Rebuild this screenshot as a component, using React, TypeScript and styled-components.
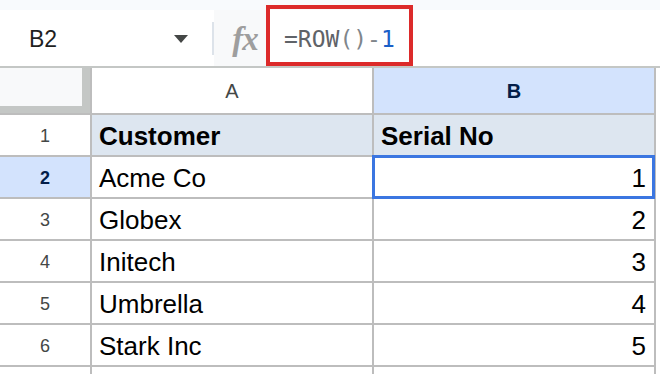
import React from 'react';
import styled, { createGlobalStyle } from 'styled-components';

const GlobalStyle = createGlobalStyle`
    html, body {
        margin: 0;
        padding: 0;
        background: #ffffff;
        font-family: 'Liberation Sans', Arial, sans-serif;
        overflow: hidden;
    }
`;

const Page = styled.div`
    position: relative;
    width: 660px;
    height: 374px;
    overflow: hidden;
    background: #ffffff;
`;

const TopStrip = styled.div`
    height: 10px;
    background: #f8fafd;
`;

const Toolbar = styled.div`
    display: flex;
    height: 56px;
    border-bottom: 2px solid #c4c7c5;
`;

const NameBox = styled.div`
    width: 212px;
    display: flex;
    align-items: center;
    justify-content: space-between;
    padding: 2px 24px 0 29px;
    box-sizing: border-box;
    background: #ffffff;
    font-size: 23px;
    color: #1f1f1f;
`;

const Caret = styled.span`
    width: 0;
    height: 0;
    border-left: 7px solid transparent;
    border-right: 7px solid transparent;
    border-top: 8px solid #444746;
`;

const Divider = styled.div`
    align-self: center;
    width: 2px;
    height: 33px;
    background: #dde3ea;
`;

const FxBox = styled.div`
    width: 52px;
    display: flex;
    align-items: center;
    justify-content: center;
    padding: 2px 0 0 10px;
    box-sizing: border-box;
    background: #f8f9fa;
    color: #9e9e9e;
    font-family: 'Liberation Serif', 'DejaVu Serif', serif;
    font-style: italic;
    font-weight: bold;
    font-size: 33px;
    letter-spacing: -1px;
`;

const FormulaBox = styled.div`
    flex: 1;
    display: flex;
    align-items: center;
    padding: 2px 0 0 18px;
    font-family: 'DejaVu Sans Mono', 'Liberation Mono', monospace;
    font-size: 23px;
    color: #5f6368;
`;

const Tok = styled.span<{ tone: string }>`
    color: ${(p) => p.tone};
`;

const Highlight = styled.div`
    position: absolute;
    left: 266px;
    top: 5px;
    width: 147px;
    height: 61px;
    box-sizing: border-box;
    border: 4px solid #dc2a2a;
    pointer-events: none;
`;

const Grid = styled.div`
    display: grid;
    width: 656px;
    grid-template-columns: 90px 280px 280px;
    grid-auto-rows: 40px;
    grid-template-rows: 45px;
    gap: 2px;
    background: #bdbdbd;
`;

const Corner = styled.div`
    display: flex;
    padding: 0 8px 7px 0;
    background: #c4c7c5;
`;

const CornerFill = styled.div`
    flex: 1;
    background: #f8f9fa;
`;

const ColHead = styled.div<{ active?: boolean }>`
    display: flex;
    align-items: center;
    justify-content: center;
    padding-top: 2px;
    background: ${(p) => (p.active ? '#d3e3fd' : '#ffffff')};
    color: ${(p) => (p.active ? '#041e49' : '#444746')};
    font-weight: ${(p) => (p.active ? 'bold' : 'normal')};
    font-size: 20px;
`;

const RowHead = styled.div<{ active?: boolean }>`
    display: flex;
    align-items: center;
    justify-content: center;
    padding-top: 2px;
    background: ${(p) => (p.active ? '#d3e3fd' : '#ffffff')};
    color: ${(p) => (p.active ? '#041e49' : '#444746')};
    font-weight: ${(p) => (p.active ? 'bold' : 'normal')};
    font-size: 18px;
`;

const Cell = styled.div<{ head?: boolean; num?: boolean }>`
    position: relative;
    display: flex;
    align-items: center;
    justify-content: ${(p) => (p.num ? 'flex-end' : 'flex-start')};
    padding: 3px 8px 0 7px;
    background: ${(p) => (p.head ? '#dde6f0' : '#ffffff')};
    font-weight: ${(p) => (p.head ? 'bold' : 'normal')};
    font-size: 26px;
    color: #000000;
`;

const Selection = styled.div`
    position: absolute;
    top: -2px;
    left: -2px;
    right: -1px;
    bottom: -2px;
    border: 3px solid #3b76e1;
`;

const Filler = styled.div`
    background: #ffffff;
`;

const rows = [
    { name: 'Acme Co', serial: 1 },
    { name: 'Globex', serial: 2 },
    { name: 'Initech', serial: 3 },
    { name: 'Umbrella', serial: 4 },
    { name: 'Stark Inc', serial: 5 },
];

const App: React.FunctionComponent = () => {
    return (
        <Page>
            <GlobalStyle />
            <TopStrip />
            <Toolbar>
                <NameBox>
                    <span>B2</span>
                    <Caret />
                </NameBox>
                <Divider />
                <FxBox>fx</FxBox>
                <FormulaBox>
                    <Tok tone="#5f6368">=ROW</Tok>
                    <Tok tone="#80868b">()-</Tok>
                    <Tok tone="#1a5fc8">1</Tok>
                </FormulaBox>
            </Toolbar>
            <Highlight />
            <Grid>
                <Corner>
                    <CornerFill />
                </Corner>
                <ColHead>A</ColHead>
                <ColHead active>B</ColHead>

                <RowHead>1</RowHead>
                <Cell head>Customer</Cell>
                <Cell head>Serial No</Cell>

                {rows.map((r, i) => (
                    <React.Fragment key={r.name}>
                        <RowHead active={i === 0}>{i + 2}</RowHead>
                        <Cell>{r.name}</Cell>
                        <Cell num>
                            {r.serial}
                            {i === 0 && <Selection />}
                        </Cell>
                    </React.Fragment>
                ))}

                <Filler />
                <Filler />
                <Filler />
            </Grid>
        </Page>
    );
};

export default App;
